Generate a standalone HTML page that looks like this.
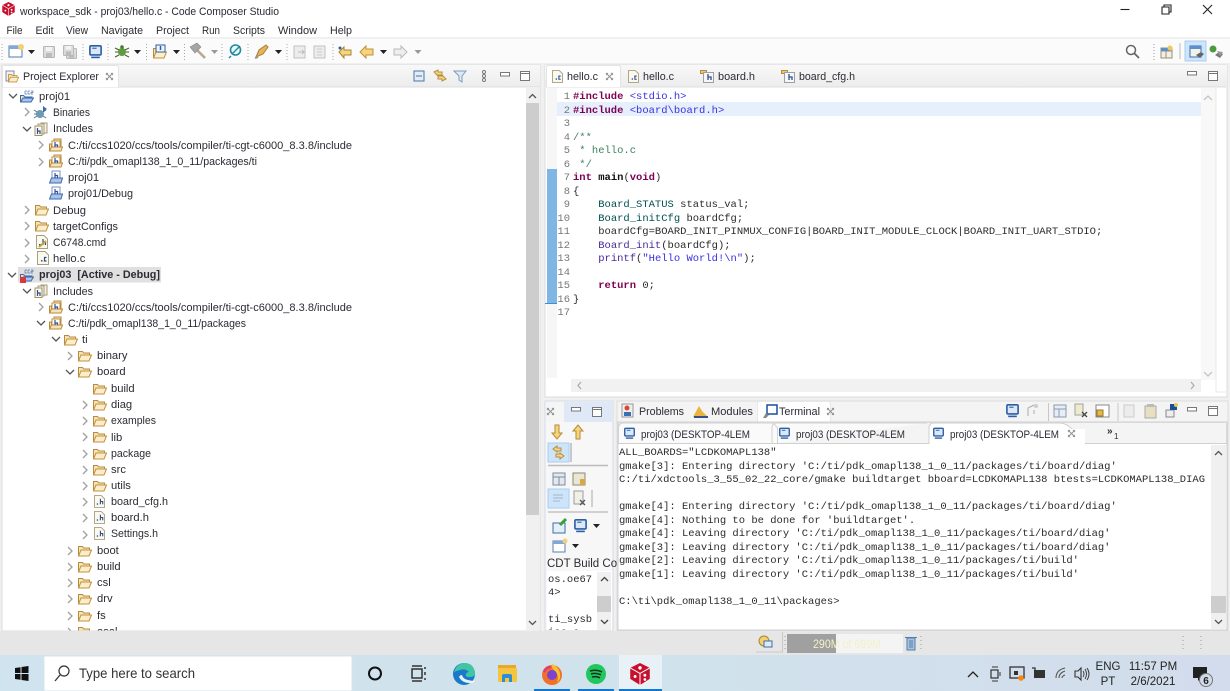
<!DOCTYPE html>
<html><head><meta charset="utf-8"><title>Code Composer Studio</title>
<style>
html,body{margin:0;padding:0;width:1230px;height:691px;overflow:hidden;background:#fff}
svg{display:block;filter:blur(.3px)}
text{font-family:"Liberation Sans",sans-serif;font-size:11.2px;fill:#2b2b33}
.m text{font-family:"Liberation Mono",monospace;font-size:10.5px;fill:#2b2b2b;white-space:pre}
.tm text{font-family:"Liberation Mono",monospace;font-size:10.5px;fill:#2b2b2b;white-space:pre}
.n text{font-family:"Liberation Mono",monospace;font-size:10.5px;fill:#777;text-anchor:end}
.k{fill:#7f0055;font-weight:bold}
.s{fill:#3a30e0}
.c{fill:#3f7f5f}
.ty{fill:#005050}
.f{fill:#4a2a9a}
</style></head><body>
<svg width="1230" height="691" viewBox="0 0 1230 691" xmlns="http://www.w3.org/2000/svg">
<defs>
<symbol id="fo" viewBox="0 0 14 12"><path d="M.5 11V1.500h4l1.200 1.500h5.800V5" fill="#f6e3b4" stroke="#b98a3c"/><path d="M.5 11 3 5h10.500L11 11z" fill="#fbeec8" stroke="#c0903f"/></symbol>
<symbol id="inc" viewBox="0 0 14 14"><path d="M.5 13V6h2V13zM12 9V1H5v3" fill="#f6e3b4" stroke="#b98a3c"/><rect x="3" y="3" width="8" height="8" fill="#fff" stroke="#c0903f"/><path d="M.5 13 2.500 9h11L12 13z" fill="#f7e4b5" stroke="#b98a3c"/><path d="M6 4v5M6 7h2.500v2" fill="none" stroke="#33509a" stroke-width="1.200"/></symbol>
<symbol id="incs" viewBox="0 0 14 14"><rect x="7" y="1" width="6" height="10" fill="#f4f1e6" stroke="#a69a78"/><rect x="4" y="2" width="6" height="10" fill="#f7f4ea" stroke="#a69a78"/><rect x="1" y="4" width="7" height="9.500" fill="#fbf9f0" stroke="#a08f62"/><path d="M3.500 6v6M3.500 9H6v3" fill="none" stroke="#2e4f8c" stroke-width="1.200"/></symbol>
<symbol id="incb" viewBox="0 0 14 14"><rect x="3" y="1" width="8" height="9" fill="#fff" stroke="#7b8fc0"/><path d="M.5 13 2.500 8h11L12 13z" fill="#a8c4ec" stroke="#3d69ad"/><path d="M6 3v5M6 5.500h2.500V8" fill="none" stroke="#33509a" stroke-width="1.200"/></symbol>
<symbol id="fh" viewBox="0 0 12 14"><path d="M.5.5H8L11.500 4v9.500H.5z" fill="#fbf8ee" stroke="#a89f80"/><path d="M7 4v6M7 7h2.500v3" fill="none" stroke="#2e4f8c" stroke-width="1.200"/><rect x="3" y="9" width="1.500" height="1.500" fill="#2e4f8c"/></symbol>
<symbol id="fc" viewBox="0 0 12 14"><path d="M.5.5H8L11.500 4v9.500H.5z" fill="#fbf8ee" stroke="#a89f80"/><path d="M9.500 6.500H7.500v3.500h2" fill="none" stroke="#2e4f8c" stroke-width="1.200"/><rect x="4" y="9" width="1.500" height="1.500" fill="#2e4f8c"/></symbol>
<symbol id="fhy" viewBox="0 0 14 14"><rect x=".5" y="1.500" width="6" height="3" fill="#e9c980" stroke="#b58b36"/><rect x="3.500" y="3.500" width="10" height="10" fill="#f6f6f2" stroke="#98a0ae"/><path d="M8 5v6M8 8h3v3" fill="none" stroke="#2e4f8c" stroke-width="1.300"/></symbol>
<symbol id="ccs" viewBox="0 0 14 14"><path d="M.5 13V6.500h3L5 8h7v1" fill="#f4e2b5" stroke="#3d69ad"/><path d="M.5 13 3 9h10.500L11 13z" fill="#a8c4ec" stroke="#3d69ad"/><path d="M5 2h2M5 2v3h2M8 2h2M8 2v3h2M11 2h2v1.500h-2V5h2" fill="none" stroke="#5a7ab0" stroke-width=".7"/></symbol>
<symbol id="mon" viewBox="0 0 12 13"><rect x=".8" y=".8" width="10.400" height="8.400" rx="1" fill="#dce8f8" stroke="#2a5fa5" stroke-width="1.500"/><path d="M3 3h4" stroke="#2a5fa5"/><path d="M2 11.500h8" stroke="#2a5fa5" stroke-width="1.500"/></symbol>
<symbol id="x" viewBox="0 0 9 9"><path d="M1 1 8 8M8 1 1 8M3 1 1 3M6 8l2-2M6 1l2 2M1 6l2 2" fill="none" stroke="#8f8f8f" stroke-width=".9"/></symbol>
<symbol id="min" viewBox="0 0 10 5"><rect x=".5" y=".5" width="9" height="3.500" fill="#fff" stroke="#777"/></symbol>
<symbol id="max" viewBox="0 0 10 10"><rect x=".5" y=".5" width="9" height="9" fill="#fff" stroke="#777"/><path d="M.5 2.500h9" stroke="#777"/></symbol>
<symbol id="r" viewBox="0 0 6 10"><path d="M1 1 5 5 1 9" fill="none" stroke="#a0a0a0" stroke-width="1.300"/></symbol>
<symbol id="d" viewBox="0 0 10 6"><path d="M1 1 5 5 9 1" fill="none" stroke="#555" stroke-width="1.300"/></symbol>
<symbol id="dn" viewBox="0 0 7 4"><path d="M0 0h7L3.500 4z" fill="#222"/></symbol>
<symbol id="dng" viewBox="0 0 7 4"><path d="M0 0h7L3.500 4z" fill="#999"/></symbol>
<symbol id="save" viewBox="0 0 12 12"><rect x=".5" y=".5" width="11" height="11" rx="1" fill="#dcdcdc" stroke="#b5b5b5"/><rect x="3" y="1" width="6" height="4" fill="#f4f4f4"/><rect x="3" y="7" width="6" height="4" fill="#bcbcbc"/></symbol>
<symbol id="dice" viewBox="0 0 16 18"><path d="M8 0 16 4V13L8 18 0 13V4z" fill="#c8102e"/><path d="M0 4l8 4.500L16 4M8 8.500V18" stroke="#fff" stroke-width=".8" fill="none"/><circle cx="8" cy="4" r="1.400" fill="#fff"/><circle cx="4" cy="11" r="1.200" fill="#fff"/><circle cx="12" cy="10" r="1.200" fill="#fff"/><circle cx="12" cy="13.500" r="1.100" fill="#fff"/></symbol>
<clipPath id="tree"><rect x="0" y="87" width="526" height="543.500"/></clipPath>
<clipPath id="cdt"><rect x="547" y="571" width="50" height="59"/></clipPath>
<linearGradient id="tb" x1="0" x2="1"><stop offset="0" stop-color="#cfe4ee"/><stop offset=".55" stop-color="#d0e2ec"/><stop offset="1" stop-color="#d3dcec"/></linearGradient>
<linearGradient id="hd" x1="0" y1="0" x2="0" y2="1"><stop offset="0" stop-color="#f8f8f8"/><stop offset="1" stop-color="#ececec"/></linearGradient>
</defs>

<!-- base -->
<rect width="1230" height="691" fill="#f0f0f0"/>
<rect width="1230" height="37" fill="#fff"/>
<rect y="37" width="1230" height="2" fill="#f0f0f0"/>
<rect y="39" width="1230" height="24" fill="#fbfbfb"/>

<!-- title -->
<use href="#dice" x="2" y="2" width="13" height="14"/>
<text x="20" y="15" textLength="259" lengthAdjust="spacingAndGlyphs">workspace_sdk - proj03/hello.c - Code Composer Studio</text>
<path d="M1120.500 9.500h9" stroke="#222" stroke-width="1.100"/>
<path d="M1162 7h7v7h-7zM1164 7V5h7v7h-2" fill="#fff" stroke="#222" stroke-width="1.100"/>
<path d="M1203 5l9 9M1212 5l-9 9" stroke="#222" stroke-width="1.100"/>
<!-- menu -->
<g>
<text x="6.500" y="34" textLength="16" lengthAdjust="spacingAndGlyphs">File</text><text x="35.500" y="34" textLength="18" lengthAdjust="spacingAndGlyphs">Edit</text><text x="66" y="34" textLength="22" lengthAdjust="spacingAndGlyphs">View</text><text x="101" y="34" textLength="42" lengthAdjust="spacingAndGlyphs">Navigate</text><text x="156" y="34" textLength="33" lengthAdjust="spacingAndGlyphs">Project</text><text x="202" y="34" textLength="18" lengthAdjust="spacingAndGlyphs">Run</text><text x="233" y="34" textLength="32" lengthAdjust="spacingAndGlyphs">Scripts</text><text x="278" y="34" textLength="39" lengthAdjust="spacingAndGlyphs">Window</text><text x="330" y="34" textLength="22" lengthAdjust="spacingAndGlyphs">Help</text>
</g>

<!-- toolbar -->
<g stroke="#a8a8a8" stroke-dasharray="1 2">
<path d="M2 44v16M83 44v16M108 44v16M146.500 44v16M184.500 44v16M222 44v16M248 44v16M287 44v16M333 44v16"/>
</g>
<rect x="9" y="46" width="13" height="11" fill="#fff" stroke="#4d7db5"/><rect x="9" y="46" width="13" height="3" fill="#7fa8d5"/><circle cx="21" cy="47" r="3" fill="#f3d071"/>
<use href="#dn" x="28" y="50" width="7" height="4"/>
<use href="#save" x="43" y="46" width="12" height="12"/><use href="#save" x="66" y="48" width="11" height="11"/><use href="#save" x="63" y="45" width="11" height="11"/>
<use href="#mon" x="89" y="45" width="13" height="14"/>
<circle cx="122" cy="52" r="4" fill="#5f9b3f"/><circle cx="122" cy="47" r="1.800" fill="#4a7a33"/><path d="M115 48l4 2M115 52h3M115 57l4-2M129 48l-4 2M129 52h-3M129 57l-4-2" stroke="#3c5f2a"/><use href="#dn" x="134" y="50" width="7" height="4"/>
<use href="#fo" x="153" y="47" width="14" height="12"/><rect x="156" y="45" width="9" height="7" fill="#f4f4f4" stroke="#2a5fa5"/><path d="M160.500 46v4" stroke="#2a5fa5" stroke-width="1.500"/><use href="#dn" x="173" y="50" width="7" height="4"/>
<path d="M197 50l8 8" stroke="#b9a98c" stroke-width="2.600"/><path d="M190 47l7-4 4 4-6 6z" fill="#a5a5a5" stroke="#8b8b8b" stroke-width=".6"/><use href="#dng" x="211" y="50" width="7" height="4"/>
<circle cx="235.500" cy="50" r="5" fill="#eaf6f8" stroke="#1f8a9e" stroke-width="1.600"/><path d="M231 56l-2 2M240 46l-8 8" stroke="#1f8a9e" stroke-width="1.400"/>
<path d="M256 57l3-7 7-5 2 2-5 7z" fill="#e7b45a" stroke="#a77f3a"/><path d="M255 58l3-1" stroke="#999" stroke-width="2"/><use href="#dn" x="275" y="50" width="7" height="4"/>
<rect x="294" y="46" width="11" height="12" fill="#ececec" stroke="#c2c2c2"/><path d="M298 52h6l-2-2m2 2-2 2" stroke="#bbb" fill="none"/><rect x="314" y="46" width="11" height="12" fill="#ececec" stroke="#c2c2c2"/><path d="M317 49h5M317 52h5M317 55h5" stroke="#ccc"/>
<path d="M339 52l5-5v3h7v5h-7v3z" fill="#f7d57c" stroke="#a98433"/><circle cx="340" cy="48" r="1.500" fill="#2a5fa5"/>
<path d="M360 52l6-6v3h7v6h-7v3z" fill="#f7d57c" stroke="#c0913c"/><use href="#dn" x="380" y="50" width="7" height="4"/>
<path d="M407 52l-6-6v3h-7v6h7v3z" fill="#eee" stroke="#bbb"/><use href="#dng" x="414.500" y="50" width="7" height="4"/>
<circle cx="1131" cy="50" r="4.500" fill="none" stroke="#666" stroke-width="1.500"/><path d="M1134.500 53.500 1139 58" stroke="#666" stroke-width="1.800"/>
<path d="M1154 44v16" stroke="#999" stroke-dasharray="1 2"/>
<rect x="1161" y="48" width="11" height="10" fill="#eef1e4" stroke="#9a9070"/><path d="M1161 51h11M1166 51v7" stroke="#9a9070"/><rect x="1161" y="48" width="9" height="3" fill="#5b8fd0"/><circle cx="1170" cy="48" r="2.500" fill="#f0c860"/>
<path d="M1180 43v16" stroke="#bbb"/>
<rect x="1185" y="41" width="21" height="20" fill="#cde5fb" stroke="#a9cdf0"/>
<rect x="1190" y="46" width="11" height="11" fill="#f2f2e8" stroke="#3d6ea8"/><rect x="1190" y="46" width="11" height="3" fill="#5b8fd0"/><path d="M1196 55l5-3 3 2-4 4z" fill="#666"/>
<circle cx="1213" cy="49" r="3.500" fill="#4c9a3e"/><path d="M1215 55l4-3 4 2-3 4z" fill="#777"/><path d="M1217 51l6 1-3 4z" fill="#999"/>

<!-- Project Explorer panel -->
<rect x="2" y="65" width="538" height="566" fill="#fff" stroke="#dcdcdc"/>
<rect x="2" y="65" width="538" height="22" fill="url(#hd)"/>
<path d="M2 87h538" stroke="#dedede"/>
<path d="M2.500 87V67q0-1.500 2-1.500h112q2 0 2 2V87" fill="#fff" stroke="#e4e4e4"/>
<rect x="6" y="71" width="8" height="10" fill="#f2f2f2" stroke="#88a"/><use href="#fo" x="8" y="73" width="11" height="10"/>
<text x="23" y="80" textLength="76" lengthAdjust="spacingAndGlyphs">Project Explorer</text>
<use href="#x" x="105" y="72" width="9" height="9"/>
<rect x="414" y="71" width="10" height="10" fill="#e4ecf6" stroke="#4a74a8"/><path d="M416 76h6" stroke="#4a74a8"/>
<path d="M434 72l4-2v2h4v3h-4v1zM446 79l-4 2v-2h-4v-3h4v-1z" fill="#f5d78a" stroke="#b78d3a"/>
<path d="M454 71h12l-4 5v6l-3-2v-4z" fill="#dfe9f3" stroke="#7a9dbd"/>
<circle cx="484" cy="72" r="1.500" fill="#fff" stroke="#777"/><circle cx="484" cy="76" r="1.500" fill="#fff" stroke="#777"/><circle cx="484" cy="80" r="1.500" fill="#fff" stroke="#777"/>
<use href="#min" x="500" y="72" width="10" height="5"/><use href="#max" x="520" y="71" width="10" height="10"/>
<!-- scrollbar -->
<rect x="526" y="88" width="13" height="542" fill="#f0f0f0"/><rect x="526" y="103" width="13" height="412" fill="#cdcdcd"/>
<path d="M529 98l3.500-3.500L536 98" fill="none" stroke="#555" stroke-width="1.300"/><path d="M529 621l3.500 3.500 3.500-3.500" fill="none" stroke="#555" stroke-width="1.300"/>

<!-- tree -->
<rect x="18" y="267" width="143" height="15.500" fill="#e0e0e0"/>
<g clip-path="url(#tree)">
<use href="#d" x="8" y="93" width="10" height="6"/><use href="#ccs" x="20" y="89" width="14" height="14"/><text x="39" y="100">proj01</text>
<use href="#r" x="24" y="107" width="6" height="10"/><circle cx="40" cy="114" r="4" fill="#6c9bb5"/><path d="M34 110l3 2M34 114h3M34 118l3-2M46 110l-3 2M46 118l-3-2" stroke="#4f7a8c"/><path d="M43 106l4 3-4 3z" fill="#3f6e9a"/><text x="53" y="116" textLength="37" lengthAdjust="spacingAndGlyphs">Binaries</text>
<use href="#d" x="22" y="126" width="10" height="6"/><use href="#incs" x="34" y="122" width="14" height="14"/><text x="53" y="132" textLength="40" lengthAdjust="spacingAndGlyphs">Includes</text>
<use href="#r" x="38" y="140" width="6" height="10"/><use href="#inc" x="49" y="138" width="14" height="14"/><text x="68" y="149" textLength="284" lengthAdjust="spacingAndGlyphs">C:/ti/ccs1020/ccs/tools/compiler/ti-cgt-c6000_8.3.8/include</text>
<use href="#r" x="38" y="157" width="6" height="10"/><use href="#inc" x="49" y="154" width="14" height="14"/><text x="68" y="165" textLength="189" lengthAdjust="spacingAndGlyphs">C:/ti/pdk_omapl138_1_0_11/packages/ti</text>
<use href="#incb" x="49" y="170" width="14" height="14"/><text x="68" y="181">proj01</text>
<use href="#incb" x="49" y="186" width="14" height="14"/><text x="68" y="197" textLength="65" lengthAdjust="spacingAndGlyphs">proj01/Debug</text>
<use href="#r" x="24" y="205" width="6" height="10"/><use href="#fo" x="35" y="204" width="14" height="12"/><text x="53" y="214">Debug</text>
<use href="#r" x="24" y="221" width="6" height="10"/><use href="#fo" x="35" y="220" width="14" height="12"/><text x="53" y="230" textLength="65" lengthAdjust="spacingAndGlyphs">targetConfigs</text>
<use href="#r" x="24" y="238" width="6" height="10"/><use href="#fh" x="36" y="235" width="12" height="14"/><path d="M39 247l7-6" stroke="#c9a23d" stroke-width="2"/><text x="53" y="246" textLength="53" lengthAdjust="spacingAndGlyphs">C6748.cmd</text>
<use href="#r" x="24" y="254" width="6" height="10"/><use href="#fc" x="37" y="251" width="12" height="14"/><text x="53" y="262">hello.c</text>
<use href="#d" x="7" y="272" width="10" height="6"/><use href="#ccs" x="20" y="268" width="14" height="14"/><rect x="20" y="277" width="6" height="6" fill="#d83a3a"/><text x="39" y="278" font-weight="bold" textLength="121" lengthAdjust="spacingAndGlyphs" xml:space="preserve">proj03  [Active - Debug]</text>
<use href="#d" x="22" y="288" width="10" height="6"/><use href="#incs" x="34" y="284" width="14" height="14"/><text x="53" y="295" textLength="40" lengthAdjust="spacingAndGlyphs">Includes</text>
<use href="#r" x="38" y="302" width="6" height="10"/><use href="#inc" x="49" y="300" width="14" height="14"/><text x="68" y="311" textLength="284" lengthAdjust="spacingAndGlyphs">C:/ti/ccs1020/ccs/tools/compiler/ti-cgt-c6000_8.3.8/include</text>
<use href="#d" x="36" y="320" width="10" height="6"/><use href="#inc" x="49" y="316" width="14" height="14"/><text x="68" y="327" textLength="178" lengthAdjust="spacingAndGlyphs">C:/ti/pdk_omapl138_1_0_11/packages</text>
<use href="#d" x="51" y="336" width="10" height="6"/><use href="#fo" x="64" y="334" width="14" height="12"/><text x="82" y="343">ti</text>
<use href="#r" x="67" y="351" width="6" height="10"/><use href="#fo" x="78" y="350" width="14" height="12"/><text x="97" y="359">binary</text>
<use href="#d" x="65" y="369" width="10" height="6"/><use href="#fo" x="78" y="366" width="14" height="12"/><text x="97" y="375">board</text>
<use href="#fo" x="93" y="383" width="14" height="12"/><text x="111" y="392">build</text>
<use href="#r" x="82" y="400" width="6" height="10"/><use href="#fo" x="93" y="399" width="14" height="12"/><text x="111" y="408">diag</text>
<use href="#r" x="82" y="416" width="6" height="10"/><use href="#fo" x="93" y="415" width="14" height="12"/><text x="111" y="424" textLength="45" lengthAdjust="spacingAndGlyphs">examples</text>
<use href="#r" x="82" y="432" width="6" height="10"/><use href="#fo" x="93" y="431" width="14" height="12"/><text x="111" y="441">lib</text>
<use href="#r" x="82" y="449" width="6" height="10"/><use href="#fo" x="93" y="448" width="14" height="12"/><text x="111" y="457" textLength="40" lengthAdjust="spacingAndGlyphs">package</text>
<use href="#r" x="82" y="465" width="6" height="10"/><use href="#fo" x="93" y="464" width="14" height="12"/><text x="111" y="473">src</text>
<use href="#r" x="82" y="481" width="6" height="10"/><use href="#fo" x="93" y="480" width="14" height="12"/><text x="111" y="489">utils</text>
<use href="#r" x="82" y="497" width="6" height="10"/><use href="#fh" x="94" y="495" width="11" height="13"/><text x="111" y="505" textLength="57" lengthAdjust="spacingAndGlyphs">board_cfg.h</text>
<use href="#r" x="82" y="513" width="6" height="10"/><use href="#fh" x="94" y="511" width="11" height="13"/><text x="111" y="521">board.h</text>
<use href="#r" x="82" y="530" width="6" height="10"/><use href="#fh" x="94" y="527" width="11" height="13"/><text x="111" y="537" textLength="47" lengthAdjust="spacingAndGlyphs">Settings.h</text>
<use href="#r" x="67" y="546" width="6" height="10"/><use href="#fo" x="78" y="545" width="14" height="12"/><text x="97" y="554">boot</text>
<use href="#r" x="67" y="562" width="6" height="10"/><use href="#fo" x="78" y="561" width="14" height="12"/><text x="97" y="570">build</text>
<use href="#r" x="67" y="578" width="6" height="10"/><use href="#fo" x="78" y="577" width="14" height="12"/><text x="97" y="586">csl</text>
<use href="#r" x="67" y="594" width="6" height="10"/><use href="#fo" x="78" y="593" width="14" height="12"/><text x="97" y="602">drv</text>
<use href="#r" x="67" y="611" width="6" height="10"/><use href="#fo" x="78" y="610" width="14" height="12"/><text x="97" y="619">fs</text>
<use href="#r" x="67" y="627" width="6" height="10"/><use href="#fo" x="78" y="626" width="14" height="12"/><text x="97" y="635">osal</text>
</g>

<!-- Editor -->
<rect x="545" y="65" width="682" height="332" fill="#fff" stroke="#dcdcdc"/>
<rect x="545" y="65" width="682" height="22" fill="url(#hd)"/>
<path d="M546 87h680" stroke="#dedede"/>
<path d="M546.500 87V67q0-1.500 2-1.500h70q2 0 2 2V87" fill="#fff" stroke="#e4e4e4"/>
<use href="#fc" x="552" y="70" width="11" height="13"/><text x="567" y="80" textLength="31" lengthAdjust="spacingAndGlyphs">hello.c</text><use href="#x" x="605" y="72" width="9" height="9"/>
<use href="#fc" x="628" y="70" width="11" height="13"/><text x="643" y="80" textLength="31" lengthAdjust="spacingAndGlyphs">hello.c</text>
<use href="#fhy" x="700" y="69" width="14" height="14"/><text x="718" y="80" textLength="37" lengthAdjust="spacingAndGlyphs">board.h</text>
<use href="#fhy" x="781" y="69" width="14" height="14"/><text x="799" y="80" textLength="56" lengthAdjust="spacingAndGlyphs">board_cfg.h</text>
<use href="#min" x="1187" y="71" width="10" height="5"/><use href="#max" x="1208" y="71" width="10" height="10"/>
<rect x="547" y="88" width="10" height="290" fill="#f6f6f6"/>
<rect x="547" y="169" width="10" height="134" fill="#7fb6e4"/><path d="M545 303.500h12" stroke="#3f8fd6"/>
<rect x="557" y="102" width="644" height="14" fill="#e6f0fc"/>
<rect x="1201" y="88" width="15" height="292" fill="#f8f8f8"/>
<path d="M1204 100l4-4 4 4M1204 372l4 4 4-4" fill="none" stroke="#c4c4c4" stroke-width="1.300"/>
<rect x="571" y="379" width="630" height="13" fill="#f1f1f1"/><rect x="547" y="379" width="24" height="13" fill="#fff"/>
<path d="M581 382l-3 3.500 3 3.500M1191 382l3 3.500-3 3.500" fill="none" stroke="#aaa" stroke-width="1.200"/>
<path d="M1216 88v304h10" fill="none" stroke="#e8e8e8"/>

<g class="n">
<text x="570" y="99">1</text><text x="570" y="113">2</text><text x="570" y="126">3</text><text x="570" y="140">4</text><text x="570" y="153">5</text><text x="570" y="167">6</text><text x="570" y="180">7</text><text x="570" y="194">8</text><text x="570" y="207">9</text><text x="570" y="221">10</text><text x="570" y="234">11</text><text x="570" y="248">12</text><text x="570" y="261">13</text><text x="570" y="275">14</text><text x="570" y="288">15</text><text x="570" y="302">16</text><text x="570" y="315">17</text>
</g>
<g class="m">
<text x="573" y="99" xml:space="preserve"><tspan class="k">#include</tspan> <tspan class="s">&lt;stdio.h&gt;</tspan></text>
<text x="573" y="113" xml:space="preserve"><tspan class="k">#include</tspan> <tspan class="s">&lt;board\board.h&gt;</tspan></text>
<text x="573" y="140"><tspan class="c">/**</tspan></text>
<text x="573" y="153" xml:space="preserve"><tspan class="c"> * hello.c</tspan></text>
<text x="573" y="167" xml:space="preserve"><tspan class="c"> */</tspan></text>
<text x="573" y="180" xml:space="preserve"><tspan class="k">int</tspan> <tspan font-weight="bold" fill="#111">main</tspan>(<tspan class="k" font-weight="normal">void</tspan>)</text>
<text x="573" y="194">{</text>
<text x="573" y="207" xml:space="preserve">    <tspan class="ty">Board_STATUS</tspan> status_val;</text>
<text x="573" y="221" xml:space="preserve">    <tspan class="ty">Board_initCfg</tspan> boardCfg;</text>
<text x="573" y="234" xml:space="preserve">    boardCfg=BOARD_INIT_PINMUX_CONFIG|BOARD_INIT_MODULE_CLOCK|BOARD_INIT_UART_STDIO;</text>
<text x="573" y="248" xml:space="preserve">    <tspan class="f">Board_init</tspan>(boardCfg);</text>
<text x="573" y="261" xml:space="preserve">    <tspan class="f">printf</tspan>(<tspan class="s">"Hello World!\n"</tspan>);</text>
<text x="573" y="288" xml:space="preserve">    <tspan class="k">return</tspan> 0;</text>
<text x="573" y="302">}</text>
</g>

<!-- left mini panel -->
<rect x="545" y="401" width="68" height="230" fill="#f7f7f7" stroke="#d5dbe6"/>
<rect x="546" y="402" width="20" height="20" fill="#f5f5f5"/>
<rect x="564" y="402" width="48" height="20" fill="#dfe8f7"/>
<use href="#x" x="546" y="407" width="9" height="9"/>
<use href="#min" x="571" y="407" width="10" height="5"/><use href="#max" x="592" y="407" width="10" height="10"/>
<path d="M555 425v8h-3l5 6 5-6h-3v-8z" fill="#f7d57c" stroke="#b58b36"/>
<path d="M576 439v-8h-3l5-6 5 6h-3v8z" fill="#f7d57c" stroke="#b58b36"/>
<rect x="548" y="443" width="21" height="19" fill="#cde5fb" stroke="#a9cdf0"/><path d="M553 449l4-3v2h4v3h-4v1zM564 456l-4 3v-2h-4v-3h4v-1z" fill="#f5d78a" stroke="#b78d3a"/>
<path d="M571 443v19" stroke="#999"/><path d="M548 465.500h60" stroke="#bbb" stroke-width="1.500"/>
<rect x="553" y="473" width="12" height="12" fill="#e4e8ee" stroke="#7a8ba0"/><path d="M553 477h12M559 477v8" stroke="#7a8ba0"/><rect x="573" y="473" width="12" height="12" fill="#e9e6d4" stroke="#8a8a70"/><rect x="580" y="479" width="5" height="6" fill="#d9a93f"/>
<rect x="548" y="489" width="21" height="19" fill="#cde5fb" stroke="#a9cdf0"/><path d="M553 495h10M553 498h10M553 501h7" stroke="#a8b4c4"/>
<rect x="574" y="491" width="9" height="13" fill="#f2f0e4" stroke="#99a"/><path d="M580 500l5 5M585 500l-5 5" stroke="#555" stroke-width="1.300"/>
<path d="M592 490v17M548 512h60" stroke="#aaa"/>
<rect x="553" y="523" width="12" height="10" fill="#e4f0f8" stroke="#3d6ea8"/><path d="M560 525l6-6" stroke="#3aa03a" stroke-width="3"/>
<use href="#mon" x="574" y="519" width="13" height="14"/><use href="#dn" x="593" y="524" width="7" height="4"/>
<rect x="553" y="541" width="12" height="11" fill="#fff" stroke="#5b7fb0"/><rect x="553" y="541" width="12" height="3" fill="#7fa8d5"/><circle cx="565" cy="541" r="2.500" fill="#f3d071"/><use href="#dn" x="572" y="544" width="7" height="4"/>
<svg x="547" y="555" width="65" height="16"><text x="0" y="12" style="font-size:11.500px">CDT Build Console</text></svg>
<rect x="547" y="571" width="65" height="59" fill="#fff"/>
<rect x="597" y="572" width="14" height="58" fill="#f0f0f0"/><rect x="597" y="596" width="14" height="16" fill="#cdcdcd"/>
<path d="M601 581l3.500-3.500 3.500 3.500M601 620l3.500 3.500 3.500-3.500" fill="none" stroke="#444" stroke-width="1.300"/>
<g class="tm" clip-path="url(#cdt)"><text x="548" y="582">os.oe67</text><text x="548" y="595">4&gt;</text><text x="548" y="622">ti_sysb</text><text x="548" y="635">ios.a</text></g>

<!-- Terminal panel -->
<rect x="617" y="401" width="611" height="230" fill="#f4f4f4" stroke="#dcdcdc"/>
<path d="M757.500 422v-20h1q0-.5 2-.5h68q2 0 2 2V422" fill="#fff" stroke="#e8e8e8"/>
<rect x="622" y="404" width="11" height="13" fill="#eee" stroke="#999"/><circle cx="627" cy="408" r="2.500" fill="#d43"/><rect x="624" y="412" width="7" height="4" fill="#3a70b0"/>
<text x="639" y="415" textLength="45" lengthAdjust="spacingAndGlyphs">Problems</text>
<path d="M693 417l6-11 3 5 6 6z" fill="#e8b53f"/><path d="M694 417h14" stroke="#36508a" stroke-width="2"/>
<text x="711" y="415" textLength="42" lengthAdjust="spacingAndGlyphs">Modules</text>
<rect x="767" y="405" width="10" height="9" fill="#fff" stroke="#1a4fa0" stroke-width="1.500"/><path d="M763 418l3-5 3 2-3 3z" fill="#888"/>
<text x="779" y="415" textLength="41" lengthAdjust="spacingAndGlyphs">Terminal</text><use href="#x" x="826" y="407" width="9" height="9"/>
<use href="#mon" x="1006" y="404" width="13" height="14"/>
<path d="M1028 416v-8l6-3M1034 414v-4" stroke="#aaa" fill="none"/><circle cx="1036" cy="406" r="2" fill="#ccc"/>
<path d="M1048.500 403v18M1118 403v18" stroke="#c8c8c8"/>
<rect x="1054" y="405" width="12" height="12" fill="#e6edf6" stroke="#8a9bb0"/><path d="M1054 409h12M1059 409v8" stroke="#8a9bb0"/><rect x="1075" y="404" width="8" height="11" fill="#efe9d2" stroke="#9a9"/><path d="M1082 412l5 5M1087 412l-5 5" stroke="#444" stroke-width="1.300"/>
<rect x="1096" y="405" width="13" height="12" fill="#fff" stroke="#888"/><rect x="1097" y="410" width="6" height="6" fill="#e4b84a" stroke="#9b7a22"/>
<rect x="1124" y="405" width="10" height="12" fill="#ececec" stroke="#ccc"/><rect x="1145" y="406" width="11" height="12" fill="#e8dfc0" stroke="#aaa"/><rect x="1147" y="404" width="7" height="3" fill="#bbb"/>
<rect x="1166" y="410" width="8" height="7" fill="#eee" stroke="#888"/><rect x="1170" y="404" width="7" height="6" fill="#1a4fa0"/><circle cx="1176" cy="405" r="2" fill="#e8c94a"/>
<use href="#min" x="1187" y="407" width="10" height="5"/><use href="#max" x="1208" y="406" width="10" height="10"/>

<rect x="618" y="422" width="609" height="208" fill="#fff" stroke="#d0d0d0"/>
<rect x="618.500" y="422.500" width="608" height="21" fill="#f4f4f4" stroke="#d8d8d8"/>
<path d="M618.500 444V428q0-5 5-5h150l4 5v16M772 444V428q0-5 5-5h150" fill="#fafafa" stroke="#d2d2d2"/>
<path d="M619 443.500h308M929 444V428q0-5 5-5h126q6 0 12 6l14 15" fill="#fff" stroke="#cfcfcf"/>
<rect x="930" y="429" width="155" height="15" fill="#fff"/>
<path d="M618 443.500h311M1086 443.500h141" stroke="#d0d0d0"/>
<use href="#mon" x="624" y="427" width="11" height="13"/><text x="641" y="438" textLength="109" lengthAdjust="spacingAndGlyphs">proj03 (DESKTOP-4LEM</text>
<use href="#mon" x="779" y="427" width="11" height="13"/><text x="796" y="438" textLength="109" lengthAdjust="spacingAndGlyphs">proj03 (DESKTOP-4LEM</text>
<use href="#mon" x="933" y="427" width="11" height="13"/><text x="950" y="438" textLength="109" lengthAdjust="spacingAndGlyphs">proj03 (DESKTOP-4LEM</text>
<use href="#x" x="1067" y="429" width="9" height="9"/>
<text x="1107" y="434" style="font-size:10px;font-weight:bold">»</text><text x="1114" y="439" style="font-size:8px">1</text>
<rect x="1211" y="445" width="15" height="184" fill="#f0f0f0"/><rect x="1211" y="596" width="15" height="17" fill="#cdcdcd"/>
<path d="M1215 455l3.500-3.500 3.500 3.500M1215 620l3.500 3.500 3.500-3.500" fill="none" stroke="#555" stroke-width="1.300"/>
<g class="tm">
<text x="619" y="455">ALL_BOARDS="LCDKOMAPL138"</text>
<text x="619" y="469">gmake[3]: Entering directory 'C:/ti/pdk_omapl138_1_0_11/packages/ti/board/diag'</text>
<text x="619" y="482">C:/ti/xdctools_3_55_02_22_core/gmake buildtarget bboard=LCDKOMAPL138 btests=LCDKOMAPL138_DIAG</text>
<text x="619" y="509">gmake[4]: Entering directory 'C:/ti/pdk_omapl138_1_0_11/packages/ti/board/diag'</text>
<text x="619" y="523">gmake[4]: Nothing to be done for 'buildtarget'.</text>
<text x="619" y="536">gmake[4]: Leaving directory 'C:/ti/pdk_omapl138_1_0_11/packages/ti/board/diag'</text>
<text x="619" y="550">gmake[3]: Leaving directory 'C:/ti/pdk_omapl138_1_0_11/packages/ti/board/diag'</text>
<text x="619" y="563">gmake[2]: Leaving directory 'C:/ti/pdk_omapl138_1_0_11/packages/ti/build'</text>
<text x="619" y="577">gmake[1]: Leaving directory 'C:/ti/pdk_omapl138_1_0_11/packages/ti/build'</text>
<text x="619" y="604">C:\ti\pdk_omapl138_1_0_11\packages&gt;</text>
</g>

<!-- status bar -->
<rect y="631" width="1230" height="24" fill="#e6e6e6"/>
<circle cx="764" cy="641" r="5" fill="#f3d071" stroke="#a98433"/><rect x="764" y="641" width="8" height="6" fill="#dfeaf5" stroke="#3d6ea8"/>
<path d="M756 652h27M782.500 632v20" stroke="#c9c9c9"/>
<rect x="787" y="634" width="116" height="19" fill="#f4f4f4"/><rect x="787" y="634" width="49" height="19" fill="#a0a0a0"/>
<text x="813" y="648" style="fill:#f1f1c8;font-size:12px" textLength="68" lengthAdjust="spacingAndGlyphs">290M of 699M</text>
<rect x="907" y="638" width="8" height="12" fill="#a8c0dc" stroke="#4f7fb0"/><path d="M905 637.500h12" stroke="#4f7fb0"/><path d="M910 640v8M912 640v8" stroke="#4f7fb0"/>
<path d="M785 636v14M921 636v14M1183 636v14M1201 636v14" stroke="#999" stroke-dasharray="1 3"/>

<!-- taskbar -->
<rect y="655" width="1230" height="36" fill="url(#tb)"/>
<path d="M15 668l5.500-.8V673H15zM21.500 667l7-1v7h-7zM15 674h5.500v5.800L15 679zM21.500 674h7v7l-7-1z" fill="#111"/>
<rect x="44" y="656" width="308" height="35" fill="#fff" stroke="#d8e4ea"/>
<circle cx="64" cy="671" r="5" fill="none" stroke="#333" stroke-width="1.200"/><path d="M60 675l-5 6" stroke="#333" stroke-width="1.300"/>
<text x="79" y="678" style="font-size:14px;fill:#333" textLength="116" lengthAdjust="spacingAndGlyphs">Type here to search</text>
<circle cx="375" cy="673.500" r="6" fill="none" stroke="#111" stroke-width="2"/>
<rect x="412" y="669" width="10" height="9" fill="none" stroke="#333" stroke-width="1.500"/><path d="M412 666h10M412 681h10M425 667v2M425 672v3M425 678v2" stroke="#333" stroke-width="1.500"/>
<circle cx="464" cy="674" r="11" fill="#1b79c9"/><path d="M454 672q3-9 11-9 8 0 10 9 1 5-6 5-4 0-3-3 1-2 3-2-4-4-9-2-4 1-6 2z" fill="#41c6a5"/><path d="M459 677q3 6 11 6 3 0 5-2-3 0-7-1-5-1-6-5-2 0-3 2z" fill="#fff" opacity=".9"/>
<rect x="498" y="665" width="18" height="3" fill="#e8a82a"/><rect x="498" y="668" width="19" height="14" fill="#f5c53f"/><path d="M502 682v-6q0-2 2-2h6q2 0 2 2v6h-3v-4h-4v4z" fill="#2a8dd8"/>
<circle cx="552" cy="675" r="10" fill="#f0702a"/><path d="M552 664q7 3 8 10 1 5-3 9 3-8-3-13-3-2-2-6z" fill="#f7c030"/><circle cx="552" cy="675" r="5" fill="#7a42d0"/><path d="M544 672q2-5 7-5" stroke="#e03a7a" stroke-width="2.500" fill="none"/>
<circle cx="596" cy="674" r="10" fill="#1fc75c"/><path d="M590 671q6-2 12 1M591 674q5-1.500 10 .8M592 677q4-1 8 .8" fill="none" stroke="#14301f" stroke-width="1.500"/>
<rect x="619" y="655" width="43" height="36" fill="#e8f1f6"/>
<use href="#dice" x="630" y="663" width="20" height="22"/>
<rect x="534" y="689" width="36" height="2" fill="#0f78d4"/><rect x="578" y="689" width="36" height="2" fill="#0f78d4"/><rect x="619" y="689" width="43" height="2" fill="#0f78d4"/>
<path d="M968 677l5-5 5 5" fill="none" stroke="#222" stroke-width="1.300"/>
<rect x="991" y="670" width="7" height="8" fill="none" stroke="#333" stroke-width="1.200"/><path d="M992 667h6M992 681h6M1000 672v4" stroke="#333"/>
<rect x="1010" y="667" width="14" height="11" fill="none" stroke="#333" stroke-width="1.300"/><rect x="1014" y="671" width="4" height="4" fill="#333"/><circle cx="1021" cy="678" r="2.800" fill="#f58a10"/>
<rect x="1034" y="670" width="11" height="8" fill="#333"/><path d="M1032 668h3v4" stroke="#333" stroke-width="1.300" fill="none"/>
<path d="M1056 678q0-8 9-10M1059 678q0-5 6-7M1062 678q0-2 3-3" fill="none" stroke="#555" stroke-width="1.100"/>
<path d="M1075 671h3l3-3v12l-3-3h-3z" fill="none" stroke="#333" stroke-width="1.100"/><path d="M1083 671q2 3 0 6M1085 669q3 5 0 10M1087 668q4 6 0 12" fill="none" stroke="#333" stroke-width=".9"/>
<text x="1108" y="670" text-anchor="middle" style="fill:#222;font-size:11.500px">ENG</text><text x="1108" y="685" text-anchor="middle" style="fill:#222;font-size:11.500px">PT</text>
<text x="1153" y="670" text-anchor="middle" style="fill:#222;font-size:11.500px">11:57 PM</text><text x="1153" y="685" text-anchor="middle" style="fill:#222;font-size:11.500px">2/6/2021</text>
<path d="M1193 667h14v11h-6l-3 3v-3h-5z" fill="#222"/><circle cx="1206" cy="680" r="6.500" fill="#cfdbe6" stroke="#777"/><text x="1206" y="684" text-anchor="middle" style="font-size:10px;fill:#222;font-weight:bold">6</text>
</svg>
</body></html>
